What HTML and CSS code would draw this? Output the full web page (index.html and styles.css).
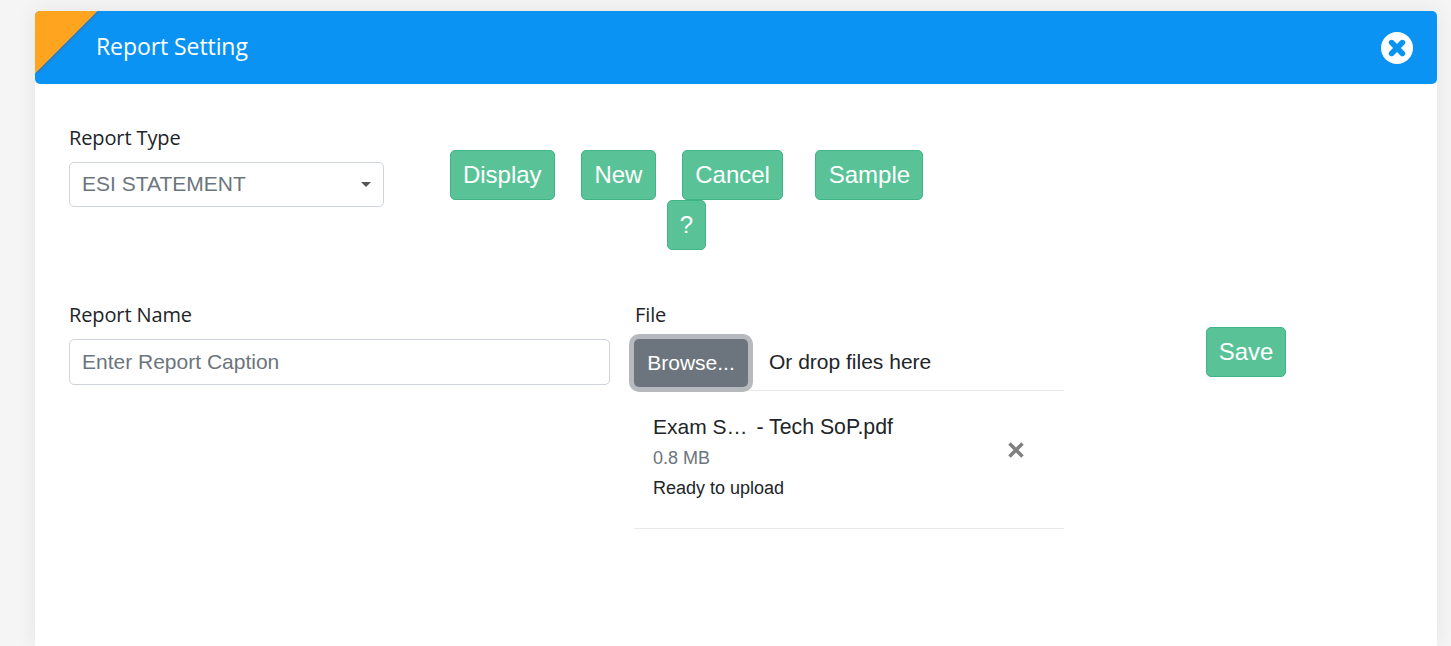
FILE: index.html
```html
<!DOCTYPE html>
<html lang="en">
<head>
<meta charset="utf-8">
<title>Report Setting</title>
<link rel="stylesheet" href="styles.css">
</head>
<body>
<main class="modal">
  <header class="modal-header">
    <span class="corner"></span>
    <h1 class="modal-title">Report Setting</h1>
    <button class="close" aria-label="Close">
      <svg viewBox="0 0 32 32" width="32" height="32"><circle cx="16" cy="16" r="16" fill="#fff"/><path d="M10.6 10.6l10.8 10.8M21.4 10.6L10.6 21.4" stroke="#0a93f2" stroke-width="5.6" stroke-linecap="round"/></svg>
    </button>
  </header>
  <section class="modal-body">
    <div class="row row-top">
      <div class="field field-type">
        <label class="label">Report Type</label>
        <div class="select"><span>ESI STATEMENT</span><i class="caret"></i></div>
      </div>
      <div class="actions">
        <button class="btn">Display</button>
        <button class="btn">New</button>
        <button class="btn">Cancel</button>
        <button class="btn btn-sample">Sample</button>
        <button class="btn btn-help">?</button>
      </div>
    </div>
    <div class="row row-bottom">
      <div class="field field-name">
        <label class="label">Report Name</label>
        <div class="input">Enter Report Caption</div>
      </div>
      <div class="field field-file">
        <label class="label">File</label>
        <div class="drop">
          <button class="browse">Browse...</button>
          <span class="drop-text">Or drop files here</span>
        </div>
        <div class="file-item">
          <div class="file-info">
            <div class="file-name"><span class="file-stem">Exam S…</span> <span class="file-tail">- Tech SoP.pdf</span></div>
            <div class="file-size">0.8 MB</div>
            <div class="file-status">Ready to upload</div>
          </div>
          <svg class="file-remove" viewBox="0 0 16 16" width="16" height="16"><path d="M1.5 1.5l13 13M14.5 1.5l-13 13" stroke="#808080" stroke-width="3.6"/></svg>
        </div>
      </div>
      <button class="btn btn-save">Save</button>
    </div>
  </section>
</main>
</body>
</html>
```
FILE: styles.css
```css
* { box-sizing: border-box; }
html, body { height: 100%; }
body {
  margin: 0;
  padding: 11px 14px 0 35px;
  background: #f5f5f5;
  font-family: "Liberation Sans", Arial, sans-serif;
  color: #212529;
  overflow: hidden;
}
.modal {
  background: #fff;
  height: 635px;
  border-radius: 6px 6px 0 0;
  box-shadow: 0 0 22px rgba(0,0,0,.07);
}
.modal-header {
  position: relative;
  height: 73px;
  background: #0a93f2;
  border-radius: 5px;
  overflow: hidden;
  display: flex;
  align-items: center;
  justify-content: space-between;
  padding: 0 24px 2px 61px;
}
.corner {
  position: absolute;
  left: 0;
  top: 0;
  width: 62px;
  height: 62px;
  background: linear-gradient(135deg, #ffa41f 50%, rgba(62,118,170,.8) 50%, rgba(10,147,242,0) 55%);
}
.modal-title {
  margin: 0;
  font: 400 23px/1.2 "Open Sans", sans-serif;
  letter-spacing: -.08px;
  color: #fff;
}
.close {
  border: 0;
  padding: 0;
  background: none;
  display: flex;
  margin-top: 2px;
}
.modal-body { padding: 0 0 0 34px; }
.row { display: flex; align-items: flex-start; }
.row-top { padding-top: 40px; height: 218px; }
.label {
  display: block;
  font: 400 20px/28px "Open Sans", sans-serif;
  letter-spacing: -.12px;
  color: #212529;
  margin-bottom: 10px;
}
.field-type { width: 315px; }
.select, .input {
  border: 1px solid #ced4da;
  border-radius: 5px;
  color: #6c757d;
  font-size: 21px;
  display: flex;
  align-items: center;
  padding: 0 12px;
}
.select { height: 45px; justify-content: space-between; padding-bottom: 2px; }
.caret {
  width: 0;
  height: 0;
  margin-top: 2px;
  border: 5.5px solid transparent;
  border-top: 5px solid #555;
  border-bottom: 0;
}
.actions {
  width: 474px;
  margin: 26px 0 0 65.5px;
  display: flex;
  flex-wrap: wrap;
  justify-content: center;
  column-gap: 26px;
}
.btn {
  height: 50px;
  padding: 0 12.4px;
  border: 1px solid #3fb587;
  border-radius: 5px;
  background: #59c397;
  color: #fff;
  font: 400 24px "Liberation Sans", Arial, sans-serif;
}
.btn-sample { margin-left: 6px; }
.btn-help { width: 39px; padding: 0; }
.field-name { width: 541px; margin-top: -1px; }
.input { height: 46px; }
.field-file { width: 429px; margin: -1px 0 0 25px; }
.drop {
  height: 52px;
  margin: 0 .5px 0 -1px;
  display: flex;
  align-items: flex-start;
  border-bottom: 1px solid #e9e9e9;
}
.browse {
  width: 114px;
  height: 48px;
  border: 0;
  border-radius: 5px;
  background: #6c757d;
  color: #fff;
  font: 400 21px "Liberation Sans", Arial, sans-serif;
  box-shadow: 0 0 0 5px #b6babe;
  padding: 0;
}
.drop-text {
  margin: 10px 0 0 21px;
  font-size: 21px;
  line-height: 26px;
}
.file-item {
  height: 138px;
  margin: 0 .5px 0 -1px;
  display: flex;
  align-items: flex-start;
  justify-content: space-between;
  padding: 23px 39.5px 0 19px;
  border-bottom: 1px solid #e9e9e9;
}
.file-name { font-size: 21px; line-height: 26px; }
.file-stem { margin-right: 3px; }
.file-tail { font-size: 21.3px; }
.file-size { font-size: 18px; line-height: 24px; color: #6c757d; margin-top: 6px; }
.file-status { font-size: 18px; line-height: 24px; margin-top: 6px; }
.file-remove { margin-top: 28px; }
.btn-save { margin: 25px 0 0 142px; padding: 0; width: 80px; }
```
